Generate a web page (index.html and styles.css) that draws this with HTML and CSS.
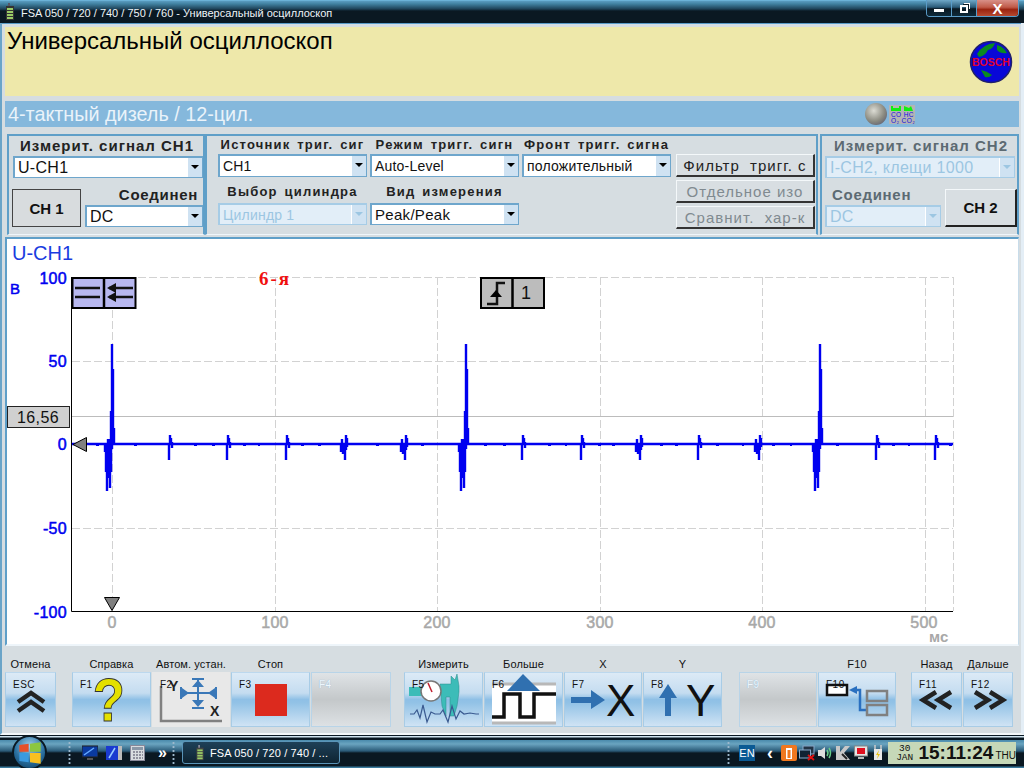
FILE: index.html
```html
<!DOCTYPE html>
<html lang="ru">
<head>
    <meta charset="UTF-8">
    <title>FSA 050 / 720 / 740 / 750 / 760 - Универсальный осциллоскоп</title>
    <link rel="stylesheet" href="styles.css">
</head>
<body>
    <div class="titlebar">
        <svg class="app-icon" width="10" height="18" viewBox="0 0 10 18">
            <rect x="3" y="0" width="2" height="4" fill="#556"/>
            <rect x="1" y="3" width="8" height="14" fill="#333"/>
            <rect x="2" y="5" width="6" height="2" fill="#9c6"/>
            <rect x="2" y="8" width="6" height="2" fill="#9c6"/>
            <rect x="2" y="11" width="6" height="2" fill="#9c6"/>
            <rect x="2" y="14" width="6" height="2" fill="#9c6"/>
        </svg>
        <span class="title-text">FSA 050 / 720 / 740 / 750 / 760 - Универсальный осциллоскоп</span>
        <div class="win-buttons">
            <div class="win-btn"><span class="glyph-min"></span></div>
            <div class="win-btn"><span class="glyph-max"></span></div>
            <div class="win-btn win-close">X</div>
        </div>
    </div>

    <div class="window">
        <div class="page-head">
            <h1>Универсальный осциллоскоп</h1>
            <svg class="globe" width="44" height="44" viewBox="0 0 44 44">
                <circle cx="22" cy="22" r="20.5" fill="#0808d8" stroke="#20206a" stroke-width="1.5"/>
                <path d="M8 14 Q14 4 26 3 Q24 9 19 10 Q16 16 10 17 Z" fill="#0a8a20"/>
                <path d="M28 5 Q35 7 38 13 Q32 14 28 10 Z" fill="#0a8a20"/>
                <path d="M12 30 Q18 31 23 35 Q20 38 16 37 Z" fill="#0a8a20"/>
                <text class="globe-text" x="22" y="26" text-anchor="middle">BOSCH</text>
            </svg>
        </div>

        <div class="info-bar">
            <span class="engine">4-тактный дизель / 12-цил.</span>
            <span class="ball"></span>
            <svg class="emis" width="26" height="19" viewBox="0 0 26 19">
                <rect width="26" height="19" fill="#b4b4b4"/>
                <path d="M2 1H4V3H10V1H12V6H2ZM15 1L20 3L22 1L24 6H15Z" fill="#10f010"/>
                <text class="emis-text" x="2" y="11.5">CO HC</text>
                <text class="emis-text" x="2" y="17.5">O₂ CO₂</text>
            </svg>
        </div>

        <div class="controls">
            <div class="panel panel-ch">
                <div class="ch-title">Измерит. сигнал CH1</div>
                <div class="field field-wide"><span class="field-text">U-CH1</span><span class="arrow"></span></div>
                <div class="ch-bottom">
                    <div class="ch-btn ch-btn-flat">CH 1</div>
                    <div class="ch-couple">
                        <div class="couple-label">Соединен</div>
                        <div class="field"><span class="field-text">DC</span><span class="arrow"></span></div>
                    </div>
                </div>
            </div>

            <div class="panel panel-trig">
                <div class="trig-grid">
                    <div class="trig-label">Источник триг. сиг</div>
                    <div class="trig-label">Режим тригг. сигн</div>
                    <div class="trig-label">Фронт тригг. сигна</div>
                    <div class="field field-sm"><span class="field-text">CH1</span><span class="arrow"></span></div>
                    <div class="field field-sm"><span class="field-text">Auto-Level</span><span class="arrow"></span></div>
                    <div class="field field-sm"><span class="field-text">положительный</span><span class="arrow"></span></div>
                    <div class="trig-label trig-label-2">Выбор цилиндра</div>
                    <div class="trig-label trig-label-2">Вид измерения</div>
                    <div></div>
                    <div class="field field-sm is-off"><span class="field-text">Цилиндр 1</span><span class="arrow"></span></div>
                    <div class="field field-md"><span class="field-text">Peak/Peak</span><span class="arrow"></span></div>
                </div>
                <div class="trig-btns">
                    <div class="trig-btn">Фильтр&nbsp; тригг. с</div>
                    <div class="trig-btn is-dim">Отдельное изо</div>
                    <div class="trig-btn is-dim">Сравнит.&nbsp; хар-к</div>
                </div>
            </div>

            <div class="panel panel-ch panel-ch2">
                <div class="ch-title">Измерит. сигнал CH2</div>
                <div class="field field-wide is-off"><span class="field-text">I-CH2, клещи 1000</span><span class="arrow"></span></div>
                <div class="ch-bottom">
                    <div class="ch-couple">
                        <div class="couple-label">Соединен</div>
                        <div class="field is-off"><span class="field-text">DC</span><span class="arrow"></span></div>
                    </div>
                    <div class="ch-btn ch-btn-raised">CH 2</div>
                </div>
            </div>
        </div>

        <div class="chart-panel">
            <svg class="chart" width="1011" height="405" viewBox="7 239 1011 405">
                <defs>
                    <path id="spike-small" d="M-1 0V16M0 0V-9M1 -6V0M2 -2V4"/>
                    <path id="spike-double" d="M-4 0V8M-3 -5V6M-2 0V10M0 0V16M1 -9V6M2 -6V3"/>
                    <path id="spike-big" d="M-7 0V8M-6 0V28M-5 0V47M-4 -5V34M-3 -5V30M-2 0V44M-1 -33V28M0 -100V5M1 -75V0M2 -16V0"/>
                </defs>

                <text class="ch-name" x="12" y="260">U-CH1</text>
                <text class="y-unit" x="10" y="294">В</text>

                <!-- сетка -->
                <path class="grid" d="M72 277.5H953M72 361.5H953M72 528.5H953"/>
                <path class="grid" d="M112.5 277V611M275.5 277V611M437.5 277V611M600.5 277V611M762.5 277V611M925.5 277V611M953.5 277V611"/>
                <path class="cursor" d="M72 416.5H953"/>
                <path class="axis" d="M71.5 277V611.5H953"/>

                <text class="y-label" x="67" y="284">100</text>
                <text class="y-label" x="67" y="367">50</text>
                <text class="y-label" x="67" y="450">0</text>
                <text class="y-label" x="67" y="534">-50</text>
                <text class="y-label" x="67" y="618">-100</text>

                <text class="x-label" x="112" y="628">0</text>
                <text class="x-label" x="275" y="628">100</text>
                <text class="x-label" x="437" y="628">200</text>
                <text class="x-label" x="600" y="628">300</text>
                <text class="x-label" x="762" y="628">400</text>
                <text class="x-label" x="924" y="628">500</text>
                <text class="x-unit" x="929" y="642">мс</text>

                <!-- сигнал -->
                <g class="trace">
                    <path d="M72 444H953"/>
                    <path class="trace-dip" d="M96 445.5h3M134 445.5h3M194 445.5h3M212 445.5h3M243 445.5h3M258 445.5h2M301 445.5h3M318 445.5h3M376 445.5h3M421 445.5h3M484 445.5h3M503 445.5h3M548 445.5h3M565 445.5h2M598 445.5h3M612 445.5h3M660 445.5h3M675 445.5h3M716 445.5h3M742 445.5h2M772 445.5h3M790 445.5h2M836 445.5h3M892 445.5h3M908 445.5h2M949 445.5h3"/>
                    <use href="#spike-big" x="112" y="444"/>
                    <use href="#spike-small" x="170" y="444"/>
                    <use href="#spike-small" x="228" y="444"/>
                    <use href="#spike-small" x="287" y="444"/>
                    <use href="#spike-double" x="345" y="444"/>
                    <use href="#spike-double" x="405" y="444"/>
                    <use href="#spike-big" x="466" y="444"/>
                    <use href="#spike-small" x="523" y="444"/>
                    <use href="#spike-small" x="582" y="444"/>
                    <use href="#spike-double" x="640" y="444"/>
                    <use href="#spike-small" x="699" y="444"/>
                    <use href="#spike-double" x="759" y="444"/>
                    <use href="#spike-big" x="820" y="444"/>
                    <use href="#spike-small" x="877" y="444"/>
                    <use href="#spike-small" x="936" y="444"/>
                </g>

                <text class="cyl" x="259" y="285">6-я</text>

                <!-- кнопки на графике -->
                <rect class="tool-blue" x="72.5" y="278" width="63" height="30"/>
                <path class="tool-line" d="M104 278V308"/>
                <path class="tool-glyph" d="M75 288H100M75 297H100M109 288H133M109 297H133"/>
                <path d="M107 288L116 283V293ZM107 297L116 292V302Z" fill="#111"/>
                <rect class="tool-gray" x="481" y="278" width="63" height="30"/>
                <path class="tool-line" d="M512.5 278V308"/>
                <path class="tool-glyph" d="M487 304H497V283H505"/>
                <path d="M490 297L496 290L502 297Z" fill="#000"/>
                <text class="tool-num" x="521" y="299">1</text>

                <rect class="cursor-box" x="7.5" y="406.5" width="62" height="21"/>
                <text class="cursor-val" x="38" y="423">16,56</text>

                <path class="marker" d="M86.5 437.5V451.5L73 444.5Z"/>
                <path class="marker" d="M104.5 597.5H119.5L112 610.5Z"/>
            </svg>
        </div>

        <div class="fkeys">
            <div class="fkey w-esc">
                <div class="fkey-label">Отмена</div>
                <div class="fkey-btn"><span class="fkey-code">ESC</span>
                    <svg class="fkey-icon" width="51" height="55" viewBox="0 0 51 55">
                        <path class="chev" d="M13 30L26 21L39 30M13 39L26 30L39 39"/>
                    </svg>
                </div>
            </div>

            <div class="fkey-group g-main">
                <div class="fkey w-79">
                    <div class="fkey-label">Справка</div>
                    <div class="fkey-btn"><span class="fkey-code">F1</span>
                        <span class="help-mark">?</span>
                    </div>
                </div>
                <div class="fkey w-78">
                    <div class="fkey-label">Автом. устан.</div>
                    <div class="fkey-btn is-flat"><span class="fkey-code">F2</span>
                        <svg class="fkey-icon" width="78" height="55" viewBox="0 0 78 55">
                            <path d="M9 14V49H70" fill="none" stroke="#808080" stroke-width="2.5"/>
                            <text class="axis-letter" x="17" y="19">Y</text>
                            <text class="axis-letter" x="58" y="44">X</text>
                            <path d="M46 8V34M40 7H52M40 36H52M32 21H60M29 15V27M64 15V27" fill="none" stroke="#3a78b8" stroke-width="2"/>
                            <path d="M46 8L40 15H52ZM46 35L40 28H52ZM37 21L30 16V26ZM56 21L63 16V26Z" fill="#3a78b8"/>
                        </svg>
                    </div>
                </div>
                <div class="fkey w-79">
                    <div class="fkey-label">Стоп</div>
                    <div class="fkey-btn"><span class="fkey-code">F3</span>
                        <span class="stop-box"></span>
                    </div>
                </div>
                <div class="fkey w-80">
                    <div class="fkey-label">&nbsp;</div>
                    <div class="fkey-btn is-off"><span class="fkey-code">F4</span></div>
                </div>
            </div>

            <div class="fkey-group g-meas">
                <div class="fkey w-79">
                    <div class="fkey-label">Измерить</div>
                    <div class="fkey-btn"><span class="fkey-code">F5</span>
                        <svg class="fkey-icon" width="79" height="55" viewBox="0 0 79 55">
                            <path d="M5 15H20V24H5Z" fill="#3cbcb8"/>
                            <path d="M36 12H47V4L51 8L53 2L55 14V20L53 34L50 44H46V25H42V44L38 34Z" fill="#3cbcb8" stroke="#2a8a88" stroke-width=".5"/>
                            <circle cx="27" cy="19" r="10" fill="#fff" stroke="#777" stroke-width="1.5"/>
                            <path d="M24 11L28 20" stroke="#c02030" stroke-width="1.5"/>
                            <path class="wave" d="M6 42H10L13 38L16 46L19 33L23 50L27 40L31 42H36L39 38L44 50L48 34L52 47L56 39L60 42L66 41L72 42H75"/>
                        </svg>
                    </div>
                </div>
                <div class="fkey w-79">
                    <div class="fkey-label">Больше</div>
                    <div class="fkey-btn"><span class="fkey-code">F6</span>
                        <svg class="fkey-icon" width="79" height="55" viewBox="0 0 79 55">
                            <rect x="8" y="11" width="64" height="41" fill="#fff"/>
                            <path d="M8 12H72M8 51H72" stroke="#b8b8b8" stroke-width="3"/>
                            <path d="M8 45H20V22H36V45H50V22H72" fill="none" stroke="#111" stroke-width="3.5"/>
                            <path d="M39 2L23 19H56Z" fill="#3070b0"/>
                        </svg>
                    </div>
                </div>
                <div class="fkey w-78">
                    <div class="fkey-label">X</div>
                    <div class="fkey-btn"><span class="fkey-code">F7</span>
                        <svg class="fkey-icon" width="78" height="55" viewBox="0 0 78 55">
                            <path d="M7 25H27V18L41 28L27 37V31H7Z" fill="#3070b0"/>
                            <text class="big-letter" x="42" y="44">X</text>
                        </svg>
                    </div>
                </div>
                <div class="fkey w-79">
                    <div class="fkey-label">Y</div>
                    <div class="fkey-btn"><span class="fkey-code">F8</span>
                        <svg class="fkey-icon" width="79" height="55" viewBox="0 0 79 55">
                            <path d="M22 44V26H16L25 12L34 26H28V44Z" fill="#3070b0"/>
                            <text class="big-letter" x="43" y="44">Y</text>
                        </svg>
                    </div>
                </div>
            </div>

            <div class="fkey-group g-view">
                <div class="fkey w-78">
                    <div class="fkey-label">&nbsp;</div>
                    <div class="fkey-btn is-off"><span class="fkey-code">F9</span></div>
                </div>
                <div class="fkey w-78">
                    <div class="fkey-label">F10</div>
                    <div class="fkey-btn"><span class="fkey-code">F10</span>
                        <svg class="fkey-icon" width="78" height="55" viewBox="0 0 78 55">
                            <rect x="9" y="13" width="20" height="10" fill="#fff" stroke="#111" stroke-width="2.5"/>
                            <path d="M38 18H42V38H49" fill="none" stroke="#2a70c0" stroke-width="2.5"/>
                            <path d="M31 18L39 14V22Z" fill="#2a70c0"/>
                            <rect x="49" y="19" width="20" height="10" fill="none" stroke="#808080" stroke-width="2.5"/>
                            <rect x="49" y="33" width="20" height="10" fill="none" stroke="#808080" stroke-width="2.5"/>
                        </svg>
                    </div>
                </div>
            </div>

            <div class="fkey-group g-nav">
                <div class="fkey w-51">
                    <div class="fkey-label">Назад</div>
                    <div class="fkey-btn"><span class="fkey-code">F11</span>
                        <svg class="fkey-icon" width="51" height="55" viewBox="0 0 51 55">
                            <path class="chev" d="M25 20L12 28L25 36M40 20L27 28L40 36"/>
                        </svg>
                    </div>
                </div>
                <div class="fkey w-50">
                    <div class="fkey-label">Дальше</div>
                    <div class="fkey-btn"><span class="fkey-code">F12</span>
                        <svg class="fkey-icon" width="50" height="55" viewBox="0 0 50 55">
                            <path class="chev" d="M12 20L25 28L12 36M27 20L40 28L27 36"/>
                        </svg>
                    </div>
                </div>
            </div>
        </div>
    </div>

    <div class="taskbar">
        <div class="orb">
            <svg width="24" height="24" viewBox="0 0 18 18">
                <path d="M1 3L8 2V8H1Z" fill="#e8502a"/>
                <path d="M9 2L17 1V8H9Z" fill="#8cc63f"/>
                <path d="M1 9H8V16L1 15Z" fill="#3a9ae0"/>
                <path d="M9 9H17V17L9 16Z" fill="#f8c020"/>
            </svg>
        </div>
        <span class="grip"></span>
        <div class="quick">
            <svg width="16" height="16" viewBox="0 0 16 16">
                <rect x="0" y="1" width="16" height="11" fill="#0a3aa0" stroke="#222"/>
                <path d="M2 10L12 3" stroke="#6af" stroke-width="1.5"/>
                <rect x="5" y="13" width="6" height="2" fill="#555"/>
            </svg>
            <svg width="16" height="16" viewBox="0 0 16 16">
                <rect x="0" y="1" width="12" height="14" fill="#1a3ad0"/>
                <path d="M3 13L9 3" stroke="#9cf" stroke-width="1.5"/>
                <rect x="12" y="1" width="4" height="14" fill="#bbb"/>
            </svg>
            <svg width="16" height="16" viewBox="0 0 16 16">
                <rect x=".5" y=".5" width="14" height="15" fill="#d8dce0" stroke="#889"/>
                <rect x="2" y="2" width="11" height="3" fill="#8a98a8"/>
                <path d="M3 7H13M3 10H13M3 13H13" stroke="#778" stroke-width="1.5" stroke-dasharray="2 1"/>
            </svg>
        </div>
        <span class="more">»</span>
        <span class="grip"></span>
        <div class="task-btn">
            <svg width="10" height="16" viewBox="0 0 10 18">
                <rect x="3" y="0" width="2" height="4" fill="#889"/>
                <rect x="1" y="3" width="8" height="14" fill="#444"/>
                <rect x="2" y="5" width="6" height="2" fill="#9c6"/>
                <rect x="2" y="8" width="6" height="2" fill="#9c6"/>
                <rect x="2" y="11" width="6" height="2" fill="#9c6"/>
                <rect x="2" y="14" width="6" height="2" fill="#9c6"/>
            </svg>
            <span>FSA 050 / 720 / 740 / ...</span>
        </div>
        <div class="tray">
            <span class="grip"></span>
            <span class="lang">EN</span>
            <span class="tray-back">‹</span>
            <svg width="16" height="16" viewBox="0 0 16 16"><rect width="16" height="16" rx="2" fill="#f07820"/><rect x="5" y="3" width="6" height="11" fill="#fff"/><rect x="6.5" y="5" width="3" height="8" fill="#f07820"/></svg>
            <svg width="16" height="16" viewBox="0 0 16 16"><rect x="4" y="1" width="11" height="8" fill="#234" stroke="#8ac"/><rect x="0.5" y="5" width="11" height="8" fill="#123" stroke="#8ac"/><path d="M9 10L15 15M15 10L9 15" stroke="#e01010" stroke-width="2"/></svg>
            <svg width="16" height="16" viewBox="0 0 14 16"><path d="M0 5H3L7 2V14L3 11H0Z" fill="#ddd"/><path d="M9 5Q11 8 9 11M11 3Q14 8 11 13" fill="none" stroke="#6c8" stroke-width="1.5"/></svg>
            <svg width="16" height="16" viewBox="0 0 14 16"><path d="M0 1H4V7L9 1H14L8 8L14 15H0Z" fill="#c8c8c8"/><path d="M6 9L11 14" stroke="#222" stroke-width="2"/></svg>
            <svg width="16" height="16" viewBox="0 0 14 16"><rect x=".5" y="1" width="13" height="10" fill="#e4e4e4" stroke="#888"/><rect x="3" y="3" width="8" height="6" fill="#e01020"/><rect x="4" y="12" width="6" height="2" fill="#bbb"/></svg>
            <svg width="14" height="16" viewBox="0 0 12 16"><rect x="2" y="4" width="8" height="11" fill="#e8e8e8"/><path d="M3 0V4M9 0V4" stroke="#ccc" stroke-width="1.5"/><path d="M7 5L4 10H6L5 14L8 9H6Z" fill="#e8c010"/></svg>
            <div class="clock">
                <div class="clock-date"><span>30</span><span>JAN</span></div>
                <span class="clock-time">15:11:24</span>
                <span class="clock-day">THU</span>
            </div>
        </div>
    </div>
</body>
</html>
```

FILE: styles.css
```css
* {
    box-sizing: border-box;
}
html, body {
    margin: 0;
    padding: 0;
}
body {
    width: 1024px;
    height: 768px;
    overflow: hidden;
    display: flex;
    flex-direction: column;
    font-family: "Liberation Sans", Arial, sans-serif;
    background: #d6dde1;
}

/* заголовок окна */
.titlebar {
    height: 23px;
    flex: none;
    display: flex;
    align-items: center;
    padding-left: 5px;
    background: linear-gradient(#7cc8ee 0, #5a9cc0 1px, #40809f 4px, #1e4258 9px, #0a1822 11px, #0a1822 100%);
    color: #eef4f8;
}
.app-icon {
    margin-right: 6px;
}
.title-text {
    font-size: 11px;
    padding-top: 2px;
}
.win-buttons {
    margin-left: auto;
    margin-right: 5px;
    align-self: flex-start;
    display: flex;
    height: 17px;
    border: 1px solid #5a9cc8;
    border-top: 0;
    border-radius: 0 0 4px 4px;
    overflow: hidden;
}
.win-btn {
    width: 25px;
    display: flex;
    align-items: center;
    justify-content: center;
    border-right: 1px solid #5a9cc8;
    background: linear-gradient(#6fa8c8, #2a5a78 45%, #0a1822 55%, #0e2a3a);
}
.glyph-min {
    width: 10px;
    height: 3px;
    margin-top: 4px;
    background: #fff;
}
.glyph-max {
    width: 8px;
    height: 8px;
    margin-top: 2px;
    border: 2px solid #fff;
    box-shadow: 2px -2px 0 -1px #0a1822, 3px -3px 0 -1px #fff;
}
.win-close {
    width: 41px;
    border-right: 0;
    color: #fff;
    font-weight: bold;
    font-size: 15px;
    background: linear-gradient(#d89088, #c05a48 45%, #9a2410 60%, #b84a30);
}

/* основное окно */
.window {
    height: 712px;
    flex: none;
    padding: 4px 2px 0 3px;
    border-left: 2px solid #6aa4c8;
    border-right: 3px solid #e4eef6;
    border-bottom: 2px solid #f4f8fa;
    box-shadow: inset 0 1px 0 #5a9cc8;
}
.page-head {
    height: 69px;
    padding: 0 6px 0 2px;
    background: #eee8aa;
    display: flex;
    align-items: flex-start;
    justify-content: space-between;
}
.page-head h1 {
    margin: 0;
    font-size: 24px;
    font-weight: normal;
    line-height: 28px;
    color: #000;
}
.globe {
    margin-top: 13px;
}
.globe-text {
    font: bold 10.5px "Liberation Sans", sans-serif;
    fill: #e00030;
}
.info-bar {
    height: 26px;
    margin-top: 5px;
    padding-left: 3px;
    display: flex;
    align-items: center;
    background: #85b8dc;
}
.engine {
    flex: 1;
    color: #eaf3fa;
    font-size: 19.8px;
}
.ball {
    width: 22px;
    height: 22px;
    border-radius: 50%;
    margin-right: 2px;
    background: radial-gradient(circle at 40% 35%, #dcdcd4, #8a8a80 55%, #4a4a6a);
}
.emis {
    margin-right: 104px;
}
.emis-text {
    font: 6.5px "Liberation Sans", sans-serif;
    letter-spacing: .4px;
    fill: #1010e0;
}

/* панели управления */
.controls {
    display: flex;
    height: 101px;
    margin-top: 7px;
    padding-left: 2px;
}
.panel {
    border: 2px solid #5f9fc8;
    border-bottom-width: 1px;
    border-bottom-color: #eef5fa;
}
.panel-ch {
    width: 198px;
    padding: 0 0 0 4px;
}
.panel-trig {
    width: 613px;
    display: flex;
    padding-left: 11px;
}
.panel-ch2 {
    width: 199px;
    margin-left: 2px;
    padding-left: 3px;
}
.ch-title {
    height: 20px;
    line-height: 20px;
    text-align: center;
    font-size: 15px;
    font-weight: bold;
    letter-spacing: 1px;
    color: #222;
    padding-right: 2px;
    white-space: nowrap;
}
.panel-ch2 .ch-title {
    color: #5c6a72;
    padding-left: 2px;
}
.field {
    display: flex;
    align-items: center;
    height: 22px;
    background: #fff;
    border: 1px solid #6ea6cc;
    border-width: 2px 1px 1px 2px;
    font-size: 16px;
    color: #111;
}
.field-wide {
    width: 190px;
}
.field-text {
    flex: 1;
    padding-left: 3px;
    letter-spacing: .3px;
    white-space: nowrap;
}
.trig-grid .field {
    height: auto;
    min-width: 0;
}
.trig-grid .field-sm {
    font-size: 14px;
}
.trig-grid .field-sm .field-text {
    letter-spacing: .2px;
}
.trig-grid .field-md {
    font-size: 15px;
}
.arrow {
    width: 15px;
    height: 100%;
    flex: none;
    position: relative;
    background: #cfe2f2;
    border-left: 1px solid #fff;
    margin-left: auto;
}
.arrow::after {
    content: "";
    position: absolute;
    left: 3px;
    top: 7px;
    border-left: 4px solid transparent;
    border-right: 4px solid transparent;
    border-top: 4px solid #000;
}
.is-off {
    background: #e2eef8;
    border-color: #a6cce6;
}
.is-off .field-text {
    color: #9cc6e2;
}
.is-off .arrow::after {
    border-top-color: #9cc6e2;
}
.ch-bottom {
    display: flex;
    margin-top: 10px;
    gap: 4px;
}
.ch-btn {
    height: 38px;
    margin-top: 1px;
    display: flex;
    align-items: center;
    justify-content: center;
    font-size: 15px;
    font-weight: bold;
    color: #111;
}
.ch-btn-flat {
    width: 69px;
    margin-left: -1px;
    background: #d8dcde;
    border: 1px solid #444;
}
.ch-btn-raised {
    width: 72px;
    background: #d8dee2;
    border-right: 2px solid #222;
    border-bottom: 2px solid #222;
    border-top: 1px solid #f4f8fa;
    border-left: 1px solid #f4f8fa;
}
.ch-couple {
    flex: 1;
    display: flex;
    flex-direction: column;
}
.couple-label {
    height: 17px;
    line-height: 14px;
    text-align: right;
    padding-right: 5px;
    font-size: 15px;
    font-weight: bold;
    letter-spacing: .7px;
    color: #222;
}
.panel-ch2 .couple-label {
    text-align: left;
    padding-left: 7px;
    color: #5c6a72;
}
.trig-grid {
    display: grid;
    grid-template-columns: 149px 149px 149px;
    grid-template-rows: 18px 23px 26px 22px;
    column-gap: 3px;
}
.trig-label {
    text-align: center;
    font-size: 13px;
    font-weight: bold;
    letter-spacing: 1.2px;
    word-spacing: 2px;
    line-height: 17px;
    color: #222;
    white-space: nowrap;
}
.trig-label-2 {
    line-height: 30px;
    height: 26px;
}
.trig-btns {
    margin-left: 5px;
    padding-top: 18px;
    display: flex;
    flex-direction: column;
    gap: 3px;
}
.trig-btn {
    width: 139px;
    height: 23px;
    display: flex;
    align-items: center;
    justify-content: center;
    background: #d8dee2;
    border-top: 1px solid #f4f8fa;
    border-left: 1px solid #f4f8fa;
    border-right: 2px solid #333;
    border-bottom: 2px solid #333;
    font-size: 15px;
    letter-spacing: 1px;
    color: #222;
    white-space: nowrap;
}
.is-dim {
    color: #808a90;
}

/* график */
.chart-panel {
    height: 409px;
    margin-top: 2px;
    border-top: 2px solid #5f9fc8;
    border-left: 2px solid #5f9fc8;
    border-right: 1px solid #c8dcea;
    border-bottom: 2px solid #eef5fa;
    background: #fff;
}
.chart {
    display: block;
}
.ch-name {
    font-size: 20px;
    fill: #1a3ce0;
}
.y-unit {
    font-size: 15px;
    fill: #0000f0;
    stroke: #0000f0;
    stroke-width: .5;
}
.grid {
    fill: none;
    stroke: #d2d2d2;
    stroke-dasharray: 8 3;
}
.cursor {
    fill: none;
    stroke: #bcbcbc;
}
.axis {
    fill: none;
    stroke: #000;
}
.y-label {
    font-size: 16px;
    fill: #0000f0;
    stroke: #0000f0;
    stroke-width: .5;
    letter-spacing: .3px;
    text-anchor: end;
}
.x-label {
    font-size: 16px;
    fill: #a8a8a8;
    stroke: #a8a8a8;
    stroke-width: .5;
    letter-spacing: .3px;
    text-anchor: middle;
}
.x-unit {
    font-size: 15px;
    font-weight: bold;
    fill: #a8a8a8;
}
.trace {
    fill: none;
    stroke: #0000f0;
    stroke-width: 2.4;
}
.trace-dip {
    stroke-width: 1;
}
.cyl {
    font: bold 19px "Liberation Serif", serif;
    letter-spacing: 2px;
    fill: #f01010;
}
.tool-blue {
    fill: #b8b8f0;
    stroke: #000;
    stroke-width: 2;
}
.tool-gray {
    fill: #bcbcbc;
    stroke: #000;
    stroke-width: 2;
}
.tool-line {
    fill: none;
    stroke: #000;
    stroke-width: 2.5;
}
.tool-glyph {
    fill: none;
    stroke: #111;
    stroke-width: 2.5;
}
.tool-num {
    font-size: 18px;
    fill: #111;
}
.cursor-box {
    fill: #d0d0d0;
    stroke: #222;
}
.cursor-val {
    font-size: 16px;
    fill: #111;
    text-anchor: middle;
    letter-spacing: .4px;
}
.marker {
    fill: #808080;
    stroke: #000;
}

/* функциональные клавиши */
.fkeys {
    display: flex;
    padding-top: 12px;
}
.fkey-group {
    display: flex;
    gap: 1px;
}
.g-main {
    margin-left: 16px;
}
.g-meas {
    margin-left: 13px;
}
.g-view {
    margin-left: 17px;
}
.g-nav {
    margin-left: 15px;
}
.w-esc, .w-51 {
    width: 51px;
}
.w-50 {
    width: 50px;
}
.w-78 {
    width: 78px;
}
.w-79 {
    width: 79px;
}
.w-80 {
    width: 80px;
}
.fkey-label {
    height: 14px;
    line-height: 12px;
    text-align: center;
    font-size: 11px;
    letter-spacing: .1px;
    color: #111;
    white-space: nowrap;
}
.fkey-btn {
    position: relative;
    height: 55px;
    display: flex;
    align-items: center;
    justify-content: center;
    border: 1px solid #a8cce6;
    border-top-color: #bcd8ee;
    background: linear-gradient(#dceaf6, #c4dcf0 38%, #8fc0e6 50%, #92c2e6 56%, #cfe3f4);
}
.fkey-btn.is-flat {
    background: #e8e8e8;
    border-color: #e8e8e8;
}
.fkey-btn.is-off {
    background: linear-gradient(#dfe3e6, #c4c8ca 50%, #dde1e4);
    border-color: #b8d4e8;
}
.fkey-code {
    position: absolute;
    left: 7px;
    top: 6px;
    z-index: 1;
    font-size: 10px;
    letter-spacing: .5px;
    color: #111;
}
.is-off .fkey-code {
    color: #eef6fc;
    text-shadow: 0 0 1px #7ab0d8;
}
.fkey-icon {
    display: block;
    position: absolute;
    left: -1px;
    top: -1px;
    overflow: visible;
}
.chev {
    fill: none;
    stroke: #222;
    stroke-width: 4.5;
}
.help-mark {
    font-size: 62px;
    line-height: 50px;
    font-weight: bold;
    color: #e4e000;
    -webkit-text-stroke: 1px #333;
    margin-left: -6px;
    transform: scaleX(.85);
}
.axis-letter {
    font-size: 14px;
    font-weight: bold;
    fill: #222;
}
.stop-box {
    width: 32px;
    height: 32px;
    background: #dc2a1e;
}
.wave {
    fill: none;
    stroke: #3a5a90;
    stroke-width: 1.2;
}
.big-letter {
    font-size: 44px;
    fill: #111;
}

/* панель задач */
.taskbar {
    height: 33px;
    flex: none;
    display: flex;
    align-items: center;
    padding: 2px 0 0 12px;
    background: linear-gradient(#0a1822 0, #0a1822 1px, #d0e4f0 1px, #d0e4f0 2px, #0a1822 3px, #0a1822 5px, #4a8aac 5px, #6aa4c0 9px, #2a5a78 16px, #0a1822 18px, #0a1822 31px, #3a7a9c 32px);
    color: #fff;
}
.orb {
    width: 35px;
    height: 35px;
    border-radius: 50%;
    display: flex;
    align-items: center;
    justify-content: center;
    flex: none;
    background: radial-gradient(circle at 50% 30%, #a0d0ec, #2a70a0 55%, #0e3a5c);
    border: 2px solid #0a1822;
}
.grip {
    width: 5px;
    height: 24px;
    flex: none;
    background-image: radial-gradient(circle, #9cb8cc 1px, transparent 1.2px);
    background-size: 5px 4px;
}
.orb + .grip {
    margin-left: 20px;
}
.quick {
    display: flex;
    gap: 8px;
    margin-left: 10px;
}
.more {
    margin-left: 12px;
    width: 13px;
    font-size: 16px;
    font-weight: bold;
    line-height: 16px;
}
.task-btn {
    width: 158px;
    height: 23px;
    margin-left: 6px;
    display: flex;
    align-items: center;
    gap: 5px;
    padding-left: 12px;
    border: 1px solid #5a94b8;
    border-radius: 3px;
    background: linear-gradient(#1e4058, #0e2432);
    font-size: 11px;
    letter-spacing: .1px;
    white-space: nowrap;
}
.tray {
    margin-left: auto;
    margin-right: 8px;
    display: flex;
    align-items: center;
    gap: 2px;
}
.lang {
    width: 16px;
    height: 16px;
    margin-left: 6px;
    margin-right: 10px;
    font-size: 11px;
    line-height: 16px;
    text-align: center;
    background: #0a5a94;
}
.tray-back {
    width: 7px;
    font-size: 18px;
    font-weight: bold;
    line-height: 16px;
    margin-right: 5px;
}
.clock {
    width: 128px;
    height: 22px;
    margin-left: 1px;
    display: flex;
    align-items: center;
    padding-left: 7px;
    background: #c6d8b8;
    color: #111;
}
.clock-date {
    width: 20px;
    display: flex;
    flex-direction: column;
    align-items: center;
    font: 9.5px/9px "Liberation Mono", monospace;
}
.clock-time {
    font: bold 19px "Liberation Sans", sans-serif;
    margin-left: 4px;
}
.clock-day {
    font: 10px "Liberation Sans", sans-serif;
    margin-top: 6px;
    margin-left: 2px;
}
```
